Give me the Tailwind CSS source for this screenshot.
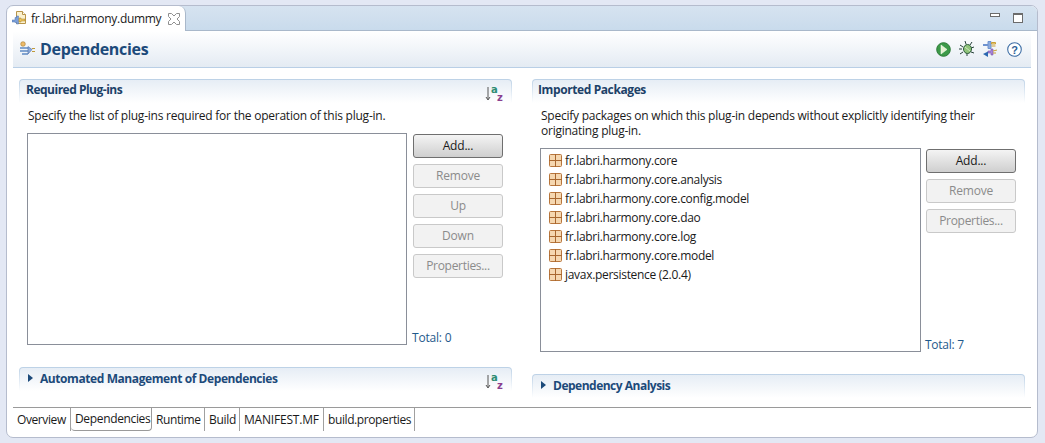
<!DOCTYPE html>
<html lang="en">
<head>
<meta charset="UTF-8">
<title>fr.labri.harmony.dummy</title>
<script src="https://cdn.jsdelivr.net/npm/@tailwindcss/browser@4"></script>
</head>
<body class="bg-[#e3e8f4] font-['Open_Sans',sans-serif] text-[12px] leading-[16px] text-[#1a1a1a] overflow-hidden">
<div class="w-[1045px] h-[443px] pl-[6px] pt-[5px]">
  <div class="w-[1032px] h-[433px] rounded-[7px] border border-[#b5bccd] bg-white flex flex-col overflow-hidden">
    <!-- editor tab strip -->
    <div class="h-[25px] shrink-0 flex items-stretch bg-linear-to-b from-[#d6e3f0] to-[#c9dbec] border-b border-[#a9b8ca]">
      <div class="w-[179px] h-[25px] bg-white rounded-t-[7px] border-r border-[#a9b8ca] flex items-center pl-[5px]">
        <svg class="w-[16px] h-[16px] shrink-0" viewBox="0 0 16 16">
          <path d="M4.500 .5h6l3 3v9h-9z" fill="#fbf1cf" stroke="#b8954a"/>
          <path d="M10.500 .5v3h3" fill="#fff" stroke="#b8954a"/>
          <path d="M0 9h3V6.500h1.500V5h2v8h-2v-1.500H3V11H0z" fill="#7c9fd8" stroke="#4f74b0" stroke-width=".5"/>
          <path d="M7 7h2v1h4v2H9v1H7z" fill="#eec45a" stroke="#a4802c" stroke-width=".5"/>
        </svg>
        <span class="ml-[3px] whitespace-nowrap tracking-[-0.3px]">fr.labri.harmony.dummy</span>
        <svg class="ml-[7px] w-[12px] h-[12px]" viewBox="0 0 12 12">
          <path d="M.5.5h3l2.500 2.500L8.500.5h3v3L9 6l2.500 2.500v3h-3L6 9l-2.500 2.500h-3v-3L3 6 .5 3.500z" fill="#fff" stroke="#8f8f8f"/>
        </svg>
      </div>
      <div class="flex-1"></div>
      <div class="flex items-start pt-[6px] pr-[14px] gap-[13px]">
        <div class="w-[10px] h-[4px] mt-[1px] border border-[#6b6b6b] bg-white"></div>
        <div class="w-[10px] h-[10px] mt-[1px] border border-[#6b6b6b] border-t-2 bg-white"></div>
      </div>
    </div>
    <!-- form header -->
    <div class="mx-[6px] h-[37px] shrink-0 flex items-center bg-linear-to-b from-white to-[#e4ebf3] border-b border-[#b9cfe6]">
      <svg class="ml-[6px] w-[17px] h-[16px] shrink-0" viewBox="0 0 17 16">
        <circle cx="4" cy="3" r="2.300" fill="#eebb6a" stroke="#a67a2c" stroke-width=".6"/>
        <path d="M1 7h8M1 10h8M3 13h6" stroke="#5f8ac4" stroke-width="1.500"/>
        <path d="M9 5.500l4 3-4 4.500z" fill="#8cabdc" stroke="#4a6ca6" stroke-width=".6"/>
        <path d="M13 7.500h3M13 10.500h3" stroke="#c09a3a"/>
      </svg>
      <h1 class="ml-[4px] text-[16px] leading-[20px] font-bold text-[#1c4a7a] tracking-[-0.3px]">Dependencies</h1>
      <div class="flex-1"></div>
      <div class="flex items-center gap-[8px] pr-[9px]">
        <svg class="w-[15px] h-[15px]" viewBox="0 0 15 15"><circle cx="7.500" cy="7.500" r="6.800" fill="#3c9a48" stroke="#2b7a37"/><path d="M5 3l6 4.500-6 4.500z" fill="#e4f2cf" stroke="#fff" stroke-width=".5"/></svg>
        <svg class="w-[16px] h-[16px]" viewBox="0 0 16 16"><path d="M1 4l3 2M0 8h3M1 13l3-2M6 0l1 3M13 1l-2 3M15 6l-3 1M15 12l-3-1M8 15l0-3" stroke="#26403a"/><ellipse cx="8.500" cy="8" rx="4" ry="4.500" fill="#8fc47a" stroke="#2e5a3c"/><path d="M6 6l5 4" stroke="#d2e8c2"/></svg>
        <svg class="w-[16px] h-[16px]" viewBox="0 0 16 16"><path d="M0 4h5" stroke="#6e92cf" stroke-width="2"/><path d="M5 .5h3v7H5z" stroke="#6e92cf" fill="#8cabdc"/><path d="M8.500 1.500h4v1.500h-4zM8.500 5h4" stroke="#c99f36" fill="#f1dc9a"/><path d="M5 10h3V8h2v6H8v-2H5z" fill="#a884d8" stroke="#7b59ad" stroke-width=".6"/><path d="M10 10l4-1M10 12h3" stroke="#c99f36"/><path d="M0 13l5-2.500V16z" fill="#2c68b0"/></svg>
        <svg class="w-[15px] h-[15px]" viewBox="0 0 15 15"><circle cx="7.500" cy="7.500" r="6.800" fill="#fff" stroke="#3f6fa6" stroke-width="1.100"/><text x="7.500" y="11.500" text-anchor="middle" font-family="Liberation Sans" font-weight="700" font-size="11" fill="#2d5f98">?</text></svg>
      </div>
    </div>
    <!-- two columns -->
    <div class="flex-1 min-h-0 mx-[12px] mt-[11px] grid grid-cols-[493px_493px] gap-x-[20px]">
      <!-- left column -->
      <div class="flex flex-col">
        <section class="h-[276px]">
          <div class="h-[24px] rounded-t-[4px] bg-linear-to-b from-[#bcd1e6] to-white px-px pt-px">
            <div class="h-[23px] rounded-t-[3px] bg-linear-to-b from-[#e6edf5] to-white flex items-start justify-between pl-[6px] pr-[7px] pt-[2px]">
              <h2 class="font-bold text-[#1c4168] tracking-[-0.5px]">Required Plug-ins</h2>
              <svg class="w-[19px] h-[20px] mt-[3px]" viewBox="0 0 19 20"><path d="M3 2v12M1 12l2 3 2-3" stroke="#555" fill="none"/><text x="6" y="8" font-family="DejaVu Sans" font-weight="700" font-size="10" fill="#2c8c72">a</text><text x="12" y="16" font-family="DejaVu Sans" font-weight="700" font-size="10" fill="#8a3f8f">z</text></svg>
            </div>
          </div>
          <p class="ml-[9px] mt-[5px] h-[16px] whitespace-nowrap tracking-[-0.24px]">Specify the list of plug-ins required for the operation of this plug-in.</p>
          <div class="ml-[8px] mt-[9px] flex">
            <div class="w-[380px] h-[212px] border border-[#8a8f99] bg-white"></div>
            <div class="ml-[6px] w-[90px] flex flex-col justify-between">
              <div class="flex flex-col gap-[6px] mt-px">
                <button class="h-[24px] rounded-[3px] border border-[#6f6f6f] bg-linear-to-b from-[#f4f4f4] to-[#cfcfcf] tracking-[-0.2px]">Add...</button>
                <button class="h-[24px] rounded-[3px] border border-[#c9c9c9] bg-[#f2f2f2] text-[#8b8b8b] tracking-[-0.2px]">Remove</button>
                <button class="h-[24px] rounded-[3px] border border-[#c9c9c9] bg-[#f2f2f2] text-[#8b8b8b] tracking-[-0.2px]">Up</button>
                <button class="h-[24px] rounded-[3px] border border-[#c9c9c9] bg-[#f2f2f2] text-[#8b8b8b] tracking-[-0.2px]">Down</button>
                <button class="h-[24px] rounded-[3px] border border-[#c9c9c9] bg-[#f2f2f2] text-[#8b8b8b] tracking-[-0.3px]">Properties...</button>
              </div>
              <span class="mb-[-1px] -ml-px text-[#1f5a8c] tracking-[-0.2px]">Total: 0</span>
            </div>
          </div>
        </section>
        <section class="mt-[12px] h-[24px] rounded-t-[4px] bg-linear-to-b from-[#bcd1e6] to-white px-px pt-px">
          <div class="h-[23px] rounded-t-[3px] bg-linear-to-b from-[#e6edf5] to-white flex items-start pl-[8px] pr-[7px] pt-[3px]">
            <svg class="w-[5px] h-[8px] mt-[3px] shrink-0" viewBox="0 0 5 8"><path d="M0 0l5 4-5 4z" fill="#1c4a7a"/></svg>
            <h2 class="ml-[7px] font-bold text-[#1c4a7a] tracking-[-0.42px]">Automated Management of Dependencies</h2>
            <svg class="ml-auto w-[19px] h-[20px] mt-[2px]" viewBox="0 0 19 20"><path d="M3 2v12M1 12l2 3 2-3" stroke="#555" fill="none"/><text x="6" y="8" font-family="DejaVu Sans" font-weight="700" font-size="10" fill="#2c8c72">a</text><text x="12" y="16" font-family="DejaVu Sans" font-weight="700" font-size="10" fill="#8a3f8f">z</text></svg>
          </div>
        </section>
      </div>
      <!-- right column -->
      <div class="flex flex-col">
        <section class="h-[283px]">
          <div class="h-[24px] rounded-t-[4px] bg-linear-to-b from-[#bcd1e6] to-white px-px pt-px">
            <div class="h-[23px] rounded-t-[3px] bg-linear-to-b from-[#e6edf5] to-white flex items-start pl-[5px] pt-[2px]">
              <h2 class="font-bold text-[#1c4168] tracking-[-0.4px]">Imported Packages</h2>
            </div>
          </div>
          <p class="ml-[9px] mt-[5px] w-[470px] leading-[15px] tracking-[-0.24px]">Specify packages on which this plug-in depends without explicitly identifying their originating plug-in.</p>
          <div class="ml-[8px] mt-[10px] flex">
            <div class="w-[381px] h-[204px] border border-[#8a8f99] bg-white pl-[8px] pt-[2px]">
              <ul class="tracking-[-0.3px]">
                <li class="h-[19px] flex items-center gap-[3px]"><svg class="w-[13px] h-[13px]" viewBox="0 0 13 13"><rect x=".5" y=".5" width="12" height="12" rx="1" fill="#f5d7b0" stroke="#b8763c"/><path d="M6.500 0v13M0 6.500h13" stroke="#a8672f"/></svg>fr.labri.harmony.core</li>
                <li class="h-[19px] flex items-center gap-[3px]"><svg class="w-[13px] h-[13px]" viewBox="0 0 13 13"><rect x=".5" y=".5" width="12" height="12" rx="1" fill="#f5d7b0" stroke="#b8763c"/><path d="M6.500 0v13M0 6.500h13" stroke="#a8672f"/></svg>fr.labri.harmony.core.analysis</li>
                <li class="h-[19px] flex items-center gap-[3px]"><svg class="w-[13px] h-[13px]" viewBox="0 0 13 13"><rect x=".5" y=".5" width="12" height="12" rx="1" fill="#f5d7b0" stroke="#b8763c"/><path d="M6.500 0v13M0 6.500h13" stroke="#a8672f"/></svg>fr.labri.harmony.core.config.model</li>
                <li class="h-[19px] flex items-center gap-[3px]"><svg class="w-[13px] h-[13px]" viewBox="0 0 13 13"><rect x=".5" y=".5" width="12" height="12" rx="1" fill="#f5d7b0" stroke="#b8763c"/><path d="M6.500 0v13M0 6.500h13" stroke="#a8672f"/></svg>fr.labri.harmony.core.dao</li>
                <li class="h-[19px] flex items-center gap-[3px]"><svg class="w-[13px] h-[13px]" viewBox="0 0 13 13"><rect x=".5" y=".5" width="12" height="12" rx="1" fill="#f5d7b0" stroke="#b8763c"/><path d="M6.500 0v13M0 6.500h13" stroke="#a8672f"/></svg>fr.labri.harmony.core.log</li>
                <li class="h-[19px] flex items-center gap-[3px]"><svg class="w-[13px] h-[13px]" viewBox="0 0 13 13"><rect x=".5" y=".5" width="12" height="12" rx="1" fill="#f5d7b0" stroke="#b8763c"/><path d="M6.500 0v13M0 6.500h13" stroke="#a8672f"/></svg>fr.labri.harmony.core.model</li>
                <li class="h-[19px] flex items-center gap-[3px]"><svg class="w-[13px] h-[13px]" viewBox="0 0 13 13"><rect x=".5" y=".5" width="12" height="12" rx="1" fill="#f5d7b0" stroke="#b8763c"/><path d="M6.500 0v13M0 6.500h13" stroke="#a8672f"/></svg>javax.persistence (2.0.4)</li>
              </ul>
            </div>
            <div class="ml-[5px] w-[90px] flex flex-col justify-between">
              <div class="flex flex-col gap-[6px] mt-px">
                <button class="h-[24px] rounded-[3px] border border-[#6f6f6f] bg-linear-to-b from-[#f4f4f4] to-[#cfcfcf] tracking-[-0.2px]">Add...</button>
                <button class="h-[24px] rounded-[3px] border border-[#c9c9c9] bg-[#f2f2f2] text-[#8b8b8b] tracking-[-0.2px]">Remove</button>
                <button class="h-[24px] rounded-[3px] border border-[#c9c9c9] bg-[#f2f2f2] text-[#8b8b8b] tracking-[-0.3px]">Properties...</button>
              </div>
              <span class="mb-[-1px] -ml-px text-[#1f5a8c] tracking-[-0.25px]">Total: 7</span>
            </div>
          </div>
        </section>
        <section class="mt-[12px] h-[24px] rounded-t-[4px] bg-linear-to-b from-[#bcd1e6] to-white px-px pt-px">
          <div class="h-[23px] rounded-t-[3px] bg-linear-to-b from-[#e6edf5] to-white flex items-start pl-[8px] pt-[3px]">
            <svg class="w-[5px] h-[8px] mt-[3px] shrink-0" viewBox="0 0 5 8"><path d="M0 0l5 4-5 4z" fill="#1c4a7a"/></svg>
            <h2 class="ml-[7px] font-bold text-[#1c4a7a] tracking-[-0.5px]">Dependency Analysis</h2>
          </div>
        </section>
      </div>
    </div>
    <!-- page tabs -->
    <div class="mx-[6px] h-[26px] shrink-0 border-t border-[#9a9a9a] flex mb-[4px]">
      <div class="w-[58px] h-[23px] border-r border-[#a0a0a0] pl-[4px] flex items-center tracking-[-0.4px]">Overview</div>
      <div class="w-[81px] h-[23px] rounded-b-[4px] border border-t-0 border-l-0 border-[#9a9a9a] pl-[4px] flex items-center tracking-[-0.35px]">Dependencies</div>
      <div class="w-[53px] h-[23px] border-r border-[#a0a0a0] pl-[4px] flex items-center tracking-[-0.4px]">Runtime</div>
      <div class="w-[35px] h-[23px] border-r border-[#a0a0a0] pl-[4px] flex items-center tracking-[-0.3px]">Build</div>
      <div class="w-[84px] h-[23px] border-r border-[#a0a0a0] pl-[4px] flex items-center tracking-[-0.2px]">MANIFEST.MF</div>
      <div class="w-[91px] h-[23px] border-r border-[#a0a0a0] pl-[4px] flex items-center tracking-[-0.4px]">build.properties</div>
    </div>
  </div>
</div>
</body>
</html>
